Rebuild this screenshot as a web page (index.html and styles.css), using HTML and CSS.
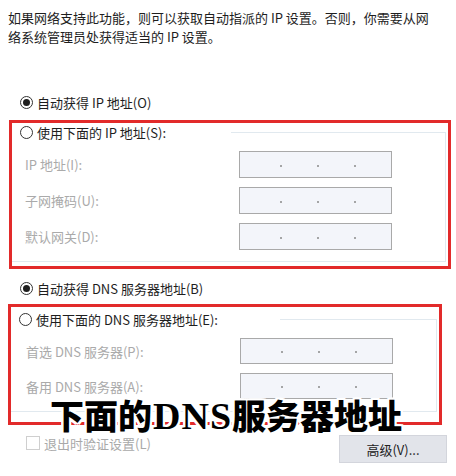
FILE: index.html
```html
<!DOCTYPE html>
<html lang="zh-CN">
<head>
<meta charset="utf-8">
<link rel="stylesheet" href="styles.css">
</head>
<body>
<div class="page">
  <p class="intro">如果网络支持此功能，则可以获取自动指派的 IP 设置。否则，你需要从网<br>络系统管理员处获得适当的 IP 设置。</p>

  <div class="radio-row first">
    <span class="radio checked"></span><span>自动获得 IP 地址(O)</span>
  </div>

  <div class="redbox box-ip">
    <fieldset class="group">
      <legend class="legend legend-ip">
        <span class="radio"></span><span>使用下面的 IP 地址(S):</span>
      </legend>
      <div class="field"><span class="label">IP 地址(I):</span><span class="ipbox"><i></i><i></i><i></i></span></div>
      <div class="field"><span class="label">子网掩码(U):</span><span class="ipbox"><i></i><i></i><i></i></span></div>
      <div class="field"><span class="label">默认网关(D):</span><span class="ipbox"><i></i><i></i><i></i></span></div>
    </fieldset>
  </div>

  <div class="radio-row second">
    <span class="radio checked"></span><span>自动获得 DNS 服务器地址(B)</span>
  </div>

  <div class="redbox box-dns">
    <fieldset class="group group-dns">
      <legend class="legend legend-dns">
        <span class="radio"></span><span>使用下面的 DNS 服务器地址(E):</span>
      </legend>
      <div class="field"><span class="label">首选 DNS 服务器(P):</span><span class="ipbox"><i></i><i></i><i></i></span></div>
      <div class="field"><span class="label">备用 DNS 服务器(A):</span><span class="ipbox"><i></i><i></i><i></i></span></div>
    </fieldset>
  </div>

  <div class="bottom">
    <label class="check"><span class="box"></span><span>退出时验证设置(L)</span></label>
    <span class="button">高级(V)...</span>
  </div>

  <div class="caption">下面的<span class="latin">DNS</span>服务器地址</div>
</div>
</body>
</html>
```

FILE: styles.css
```css
* { box-sizing: border-box; }

html, body {
  margin: 0;
  padding: 0;
  background: #ffffff;
}

.page {
  position: relative;
  width: 456px;
  height: 476px;
  overflow: hidden;
  font-family: "Noto Sans CJK SC", "Noto Sans", sans-serif;
  font-size: 13px;
  color: #1e1e1e;
}

.intro {
  margin: 0;
  padding: 8px 0 0 8px;
  line-height: 19px;
  white-space: nowrap;
}

.radio-row {
  display: flex;
  align-items: center;
  gap: 4px;
  height: 20px;
  padding-left: 20px;
}

.radio-row.first { margin-top: 46px; }
.radio-row.second { margin-top: 9px; }

.radio {
  width: 13px;
  height: 13px;
  border: 1px solid #333;
  border-radius: 50%;
  display: inline-flex;
  align-items: center;
  justify-content: center;
  flex: none;
  background: #fff;
}

.radio.checked::after {
  content: "";
  width: 7px;
  height: 7px;
  border-radius: 50%;
  background: #1e1e1e;
}

.redbox {
  border: 3px solid #e22a2a;
}

.box-ip {
  margin: 8px 5px 0 9px;
}

.box-dns {
  margin: 6px 14px 0 8px;
  padding-top: 3px;
}

.group {
  margin: 0 2px 4px 0;
  padding: 10px 0 11px 0;
  border: 1px solid #e1e9ef;
  border-left: none;
  min-width: 0;
}

.group-dns {
  margin-bottom: 10px;
  padding-bottom: 12px;
}

.legend {
  display: flex;
  align-items: center;
  gap: 4px;
  height: 18px;
  padding: 0 0 0 8px;
  margin: 0;
  background: #fff;
}

.legend-ip { width: 219px; }
.legend-dns { width: 269px; }

.field {
  display: flex;
  align-items: center;
  height: 27px;
  padding-left: 13px;
}

.field + .field { margin-top: 9px; }

.group-dns .field {
  height: 26px;
  padding-left: 15px;
}

.label {
  width: 214px;
  flex: none;
  color: #aaaaaa;
}

.ipbox {
  width: 153px;
  height: 100%;
  border: 1px solid #a9a9a9;
  background: #f3f5fa;
  display: flex;
  align-items: center;
  padding-top: 2px;
  padding-left: 40px;
  gap: 35px;
}

.ipbox i {
  width: 2px;
  height: 2px;
  background: #8a8a8a;
  border-radius: 50%;
}

.bottom {
  display: flex;
  justify-content: space-between;
  align-items: flex-start;
  margin: 10px 9px 0 26px;
}

.check {
  display: flex;
  align-items: center;
  gap: 4px;
  height: 16px;
  color: #a9a9a9;
}

.check .box {
  width: 14px;
  height: 14px;
  border: 1px solid #cfcfcf;
  background: #fff;
}

.button {
  width: 108px;
  height: 28px;
  display: flex;
  align-items: center;
  justify-content: center;
  background: #e2e4ea;
  border: 1px solid #d3d5dc;
  color: #222;
}

.caption {
  position: absolute;
  left: 50px;
  top: 397px;
  font-family: "Noto Sans CJK SC", sans-serif;
  font-weight: 900;
  font-size: 34px;
  line-height: 36px;
  color: #000;
  white-space: nowrap;
  text-shadow:
    2px 0 0 #fff, -2px 0 0 #fff, 0 2px 0 #fff, 0 -2px 0 #fff,
    2px 2px 0 #fff, -2px -2px 0 #fff, 2px -2px 0 #fff, -2px 2px 0 #fff;
}

.caption .latin {
  font-family: "Liberation Serif", serif;
  font-weight: 700;
  font-size: 38px;
  letter-spacing: 1px;
  margin-left: 1px;
}
```
